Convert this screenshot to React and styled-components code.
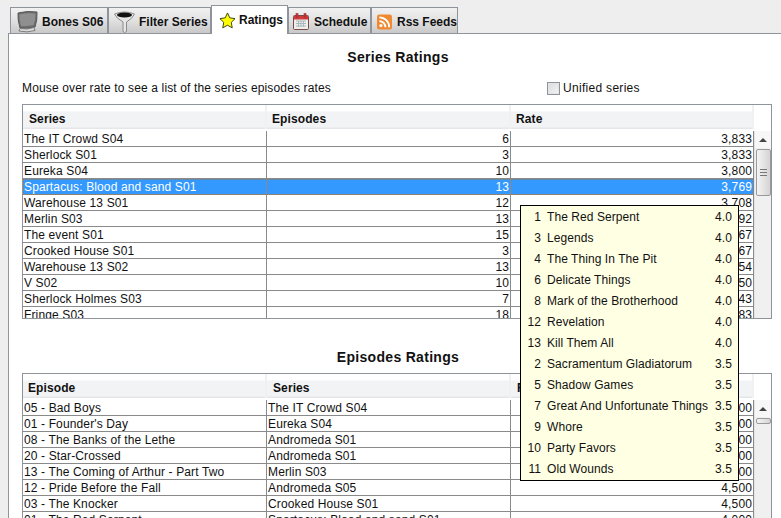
import React from "react";
import styled, { createGlobalStyle } from "styled-components";

const GlobalStyle = createGlobalStyle`
  html, body {
    margin: 0;
    height: 100%;
    overflow: hidden;
    background: #eeeeee;
  }
  body {
    font-family: "Liberation Sans", Arial, sans-serif;
    font-size: 12px;
    color: #111;
  }
`;

const seriesRows = [
  ["The IT Crowd S04", 6, "3,833"],
  ["Sherlock S01", 3, "3,833"],
  ["Eureka S04", 10, "3,800"],
  ["Spartacus: Blood and sand S01", 13, "3,769"],
  ["Warehouse 13 S01", 12, "3,708"],
  ["Merlin S03", 13, "3,692"],
  ["The event S01", 15, "3,667"],
  ["Crooked House S01", 3, "3,667"],
  ["Warehouse 13 S02", 13, "3,654"],
  ["V S02", 10, "3,650"],
  ["Sherlock Holmes S03", 7, "3,643"],
  ["Fringe S03", 18, "3,583"],
];

const episodeRows = [
  ["05 - Bad Boys", "The IT Crowd S04", "4,500"],
  ["01 - Founder's Day", "Eureka S04", "4,500"],
  ["08 - The Banks of the Lethe", "Andromeda S01", "4,500"],
  ["20 - Star-Crossed", "Andromeda S01", "4,500"],
  ["13 - The Coming of Arthur - Part Two", "Merlin S03", "4,500"],
  ["12 - Pride Before the Fall", "Andromeda S05", "4,500"],
  ["03 - The Knocker", "Crooked House S01", "4,500"],
  ["01 - The Red Serpent", "Spartacus: Blood and sand S01", "4,000"],
];

const popupRows = [
  [1, "The Red Serpent", "4.0"],
  [3, "Legends", "4.0"],
  [4, "The Thing In The Pit", "4.0"],
  [6, "Delicate Things", "4.0"],
  [8, "Mark of the Brotherhood", "4.0"],
  [12, "Revelation", "4.0"],
  [13, "Kill Them All", "4.0"],
  [2, "Sacramentum Gladiatorum", "3.5"],
  [5, "Shadow Games", "3.5"],
  [7, "Great And Unfortunate Things", "3.5"],
  [9, "Whore", "3.5"],
  [10, "Party Favors", "3.5"],
  [11, "Old Wounds", "3.5"],
];

const MonitorIcon = () => (
  <svg width="22" height="23" viewBox="0 0 22 23">
    <path d="M2 3 Q11 0.500 21 2 Q21.500 10 19 17 Q10 19 4 18 Q1.500 10 2 3Z" fill="#6f6f6f" stroke="#555" />
    <path d="M3.500 4.500 Q11 2.500 19.500 3.500 Q19.500 10 17.500 15 Q10 16.500 5 16 Q3.300 10 3.500 4.500Z" fill="#8f8f8f" />
    <path d="M4 18.500 Q11 20 18 17.500 L19 20.500 Q11 23 3 21Z" fill="#dcdcdc" stroke="#7c7c7c" />
  </svg>
);

const FunnelIcon = () => (
  <svg width="21" height="23" viewBox="0 0 21 23">
    <path d="M0.500 4 Q10.500 0 20.500 4 Q19 8 12.500 12 V21.500 Q10.500 23.500 9 21.500 V12 Q2 8 0.500 4Z" fill="#e6e6e6" stroke="#8a8a8a" />
    <ellipse cx="10.500" cy="5" rx="7.500" ry="2.600" fill="#111" />
  </svg>
);

const StarIcon = () => (
  <svg width="17" height="17" viewBox="0 0 18 18">
    <path d="M9 1 L11.400 6.200 L17 7 L13 11 L14 16.800 L9 14 L4 16.800 L5 11 L1 7 L6.600 6.200Z" fill="#ffff00" stroke="#3a3a10" strokeLinejoin="round" />
  </svg>
);

const CalendarIcon = () => (
  <svg width="16" height="17" viewBox="0 0 16 17">
    <rect x="0.500" y="2.500" width="15" height="14" rx="1" fill="#eeeeea" stroke="#7a4a4a" />
    <rect x="1" y="3" width="14" height="3.500" fill="#d23c3c" />
    <rect x="3" y="0.500" width="2" height="4" fill="#c33" stroke="#833" strokeWidth="0.500" />
    <rect x="11" y="0.500" width="2" height="4" fill="#c33" stroke="#833" strokeWidth="0.500" />
    <path d="M3 8h10M3 10.500h10M3 13h10M5.500 8v6M8 8v6M10.500 8v6" stroke="#a9b9bd" fill="none" />
  </svg>
);

const RssIcon = () => (
  <svg width="16" height="16" viewBox="0 0 16 16">
    <rect x="0" y="0" width="16" height="16" rx="2.500" fill="#f08a30" />
    <circle cx="4.200" cy="11.800" r="1.700" fill="#fff" />
    <path d="M2.500 7 A6.500 6.500 0 0 1 9 13.500" fill="none" stroke="#fff" strokeWidth="2" />
    <path d="M2.500 3 A10.500 10.500 0 0 1 13 13.500" fill="none" stroke="#fff" strokeWidth="2" />
  </svg>
);

const tabs = [
  { label: "Bones S06", icon: <MonitorIcon />, width: 98, pad: 5, gap: 4 },
  { label: "Filter Series", icon: <FunnelIcon />, width: 103, pad: 5, gap: 4 },
  { label: "Ratings", icon: <StarIcon />, width: 77, pad: 7, gap: 3, active: true },
  { label: "Schedule", icon: <CalendarIcon />, width: 83, pad: 4, gap: 5 },
  { label: "Rss Feeds", icon: <RssIcon />, width: 87, pad: 5, gap: 5 },
];

const Page = styled.div`
  height: 518px;
  padding-top: 5px;
  box-sizing: border-box;
  overflow: hidden;
`;

const TabBar = styled.div`
  display: flex;
  align-items: flex-end;
  height: 28px;
  padding-left: 10px;
`;

const Tab = styled.div`
  display: flex;
  align-items: center;
  gap: ${(p) => p.$gap}px;
  box-sizing: border-box;
  width: ${(p) => p.$width}px;
  height: ${(p) => (p.$active ? 29 : 26)}px;
  margin-bottom: ${(p) => (p.$active ? -1 : 0)}px;
  padding: ${(p) => (p.$active ? 0 : 2)}px 0 0 ${(p) => p.$pad}px;
  border: 1px solid #8f939b;
  border-bottom: none;
  background: ${(p) =>
    p.$active ? "#ffffff" : "linear-gradient(#f1f1f1, #e3e3e3 45%, #c9c9c9)"};
  font-size: 12px;
  font-weight: bold;
  white-space: nowrap;
  color: #111;
  position: relative;
  z-index: ${(p) => (p.$active ? 2 : 1)};
`;

const Panel = styled.div`
  position: relative;
  margin-left: 8px;
  height: 500px;
  box-sizing: border-box;
  background: #ffffff;
  border-left: 1px solid #8f939b;
  border-top: 1px solid #8f939b;
  padding: 0 10px 0 13px;
`;

const Title = styled.div`
  text-align: center;
  font-size: 14px;
  font-weight: bold;
  letter-spacing: 0.3px;
  line-height: 16px;
  padding-left: 3px;
  margin: ${(p) => p.$top}px 0 ${(p) => p.$bottom}px;
`;

const HintRow = styled.div`
  display: flex;
  align-items: center;
  height: 16px;
  margin-bottom: 8px;
`;

const Hint = styled.span`
  width: 525px;
  letter-spacing: 0.14px;
`;

const CheckLabel = styled.label`
  display: flex;
  align-items: center;
  gap: 3px;
  letter-spacing: 0.3px;
`;

const CheckBox = styled.span`
  display: block;
  width: 11px;
  height: 11px;
  border: 1px solid #8f939b;
  background: linear-gradient(135deg, #dcdcdc, #f4f4f4);
  box-shadow: inset 0 0 0 1px #e4e4e4;
`;

const TableFrame = styled.div`
  box-sizing: border-box;
  width: 750px;
  height: ${(p) => p.$height}px;
  border: 1px solid #8f939b;
  overflow: hidden;
  display: grid;
  grid-template-columns: 731px 17px;
  grid-template-rows: 26px 1fr;
`;

const HeaderRow = styled.div`
  display: grid;
  grid-template-columns: 244px 244px 243px;
  background: #fff;
`;

const HeaderCell = styled.div`
  box-sizing: border-box;
  height: 24px;
  padding: 6px 0 0 ${(p) => p.$pad}px;
  border-right: 2px solid #f0f1f3;
  background: linear-gradient(#ffffff 0, #ffffff 6px, #f2f3f5 7px, #f2f3f5 22px, #e4e6e9 23px);
  font-weight: bold;
  letter-spacing: 0.1px;
  line-height: 16px;
`;

const HeaderCorner = styled.div`
  background: #fff;
`;

const Body = styled.div`
  overflow: hidden;
`;

const Row = styled.div`
  display: grid;
  grid-template-columns: 244px 244px 243px;
  height: 16px;
  box-sizing: border-box;
  border-bottom: 1px solid #8a8a8a;
  background: ${(p) => (p.$selected ? "#3399ff" : "#ffffff")};
  color: ${(p) => (p.$selected ? "#ffffff" : "#111")};
  outline: ${(p) => (p.$selected ? "1px dotted #9a7a50" : "none")};
  outline-offset: -1px;
`;

const Cell = styled.div`
  box-sizing: border-box;
  padding: 1px 1px 0;
  border-right: 1px solid #8a8a8a;
  line-height: 15px;
  letter-spacing: 0.13px;
  text-align: ${(p) => (p.$right ? "right" : "left")};
  white-space: nowrap;
  overflow: hidden;
`;

const ScrollBar = styled.div`
  display: flex;
  flex-direction: column;
  align-items: center;
  background: #f0f0f0;
  border-left: 1px solid #e4e4e4;
`;

const ScrollArrow = styled.div`
  height: 17px;
  width: 100%;
  display: flex;
  align-items: center;
  justify-content: center;
  background: #f7f7f7;
  &::before {
    content: "";
    border-left: 4px solid transparent;
    border-right: 4px solid transparent;
    border-bottom: 4px solid #444;
  }
`;

const Thumb = styled.div`
  box-sizing: border-box;
  width: 15px;
  height: ${(p) => p.$height}px;
  margin-top: 1px;
  border: 1px solid #9a9a9a;
  border-radius: 2px;
  background: linear-gradient(90deg, #f4f4f4, #d4d4d4);
  display: flex;
  align-items: center;
  justify-content: center;
`;

const Grip = styled.div`
  width: 7px;
  height: 7px;
  background: repeating-linear-gradient(#777 0, #777 1px, transparent 1px, transparent 3px);
`;

const Popup = styled.div`
  position: absolute;
  left: 511px;
  top: 171px;
  width: 219px;
  box-sizing: border-box;
  padding: 1px 0 0;
  border: 1px solid #000;
  background: #ffffe4;
`;

const PopupRow = styled.div`
  display: grid;
  grid-template-columns: 20px 168px 1fr;
  column-gap: 6px;
  height: 21px;
  line-height: 21px;
  letter-spacing: 0.07px;
`;

const PopupNum = styled.span`
  text-align: right;
`;

const PopupRate = styled.span`
  margin-left: -6px;
`;

const DataTable = ({ height, columns, rows, renderCells, selected, thumbHeight, grip }) => (
  <TableFrame $height={height}>
    <HeaderRow>
      {columns.map((c) => (
        <HeaderCell key={c.name} $pad={c.pad}>
          {c.name}
        </HeaderCell>
      ))}
    </HeaderRow>
    <HeaderCorner />
    <Body>
      {rows.map((r, i) => (
        <Row key={r[0]} $selected={i === selected}>
          {renderCells(r)}
        </Row>
      ))}
    </Body>
    <ScrollBar>
      <ScrollArrow />
      <Thumb $height={thumbHeight}>{grip && <Grip />}</Thumb>
    </ScrollBar>
  </TableFrame>
);

const App = () => {
  return (
    <Page>
      <GlobalStyle />
      <TabBar>
        {tabs.map((t) => (
          <Tab key={t.label} $width={t.width} $active={t.active} $pad={t.pad} $gap={t.gap}>
            {t.icon}
            {t.label}
          </Tab>
        ))}
      </TabBar>
      <Panel>
        <Title $top={15} $bottom={15}>Series Ratings</Title>
        <HintRow>
          <Hint>Mouse over rate to see a list of the series episodes rates</Hint>
          <CheckLabel>
            <CheckBox />
            Unified series
          </CheckLabel>
        </HintRow>
        <DataTable
          height={215}
          columns={[
            { name: "Series", pad: 6 },
            { name: "Episodes", pad: 5 },
            { name: "Rate", pad: 5 },
          ]}
          rows={seriesRows}
          selected={3}
          thumbHeight={47}
          grip
          renderCells={(r) => (
            <>
              <Cell>{r[0]}</Cell>
              <Cell $right>{r[1]}</Cell>
              <Cell $right>{r[2]}</Cell>
            </>
          )}
        />
        <Title $top={30} $bottom={8}>Episodes Ratings</Title>
        <DataTable
          height={200}
          columns={[
            { name: "Episode", pad: 5 },
            { name: "Series", pad: 6 },
            { name: "Rate", pad: 6 },
          ]}
          rows={episodeRows}
          thumbHeight={6}
          renderCells={(r) => (
            <>
              <Cell>{r[0]}</Cell>
              <Cell>{r[1]}</Cell>
              <Cell $right>{r[2]}</Cell>
            </>
          )}
        />
        <Popup>
          {popupRows.map((p) => (
            <PopupRow key={p[0]}>
              <PopupNum>{p[0]}</PopupNum>
              <span>{p[1]}</span>
              <PopupRate>{p[2]}</PopupRate>
            </PopupRow>
          ))}
        </Popup>
      </Panel>
    </Page>
  );
};

export default App;
